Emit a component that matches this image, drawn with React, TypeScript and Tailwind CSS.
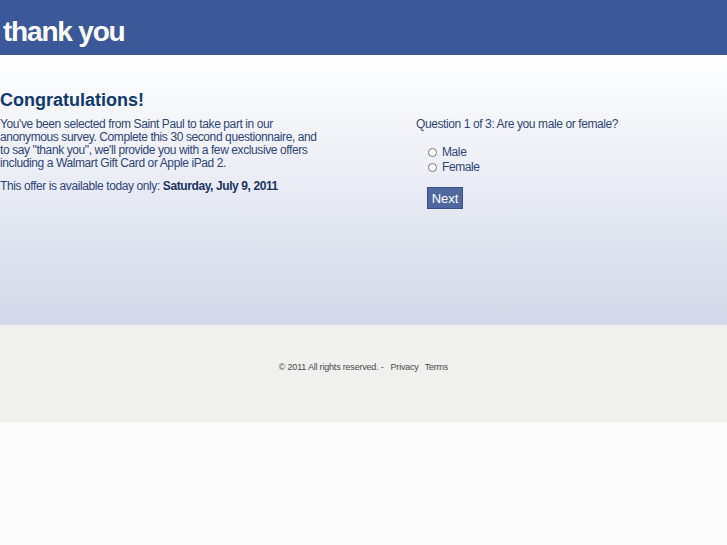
import { useState } from 'react'

export default function App() {
  const [gender, setGender] = useState('')

  return (
    <div className="min-h-[545px] bg-[#fbfbfb] font-['Liberation_Sans',Arial,sans-serif]">
      {/* Header */}
      <header className="h-[55px] bg-[#3b5998] flex items-center px-[3px]">
        <h1 className="text-white font-bold text-[28px] tracking-[-1.2px] leading-none pt-[8px]">
          thank you
        </h1>
      </header>

      {/* Main */}
      <main className="h-[270px] bg-gradient-to-b from-white to-[#d2d8e8] flex pt-[34px]">
        <section className="w-[320px] text-[12px] leading-[13px] tracking-[-0.4px] text-[#2f4674]">
          <h2 className="text-[#0f3a6d] font-bold text-[18px] leading-[22px] tracking-normal mb-[7px]">Congratulations!</h2>
          <p>
            You've been selected from Saint Paul to take part in our anonymous survey. Complete this 30 second
            questionnaire, and to say "thank you", we'll provide you with a few exclusive offers including a Walmart Gift
            Card or Apple iPad 2.
          </p>
          <p className="mt-[10px]">
            This offer is available today only: <b className="text-[#1b3463]">Saturday, July 9, 2011</b>
          </p>
        </section>

        <section className="ml-[96px] pt-[29px] text-[12px] leading-[13px] tracking-[-0.4px] text-[#2f4674]">
          <p>Question 1 of 3: Are you male or female?</p>
          <div className="mt-[15px] ml-[12px] flex flex-col gap-[2px]">
            {['Male', 'Female'].map(g => (
              <label key={g} className="flex items-center gap-[5px] h-[13px]">
                <input
                  type="radio"
                  name="gender"
                  checked={gender === g}
                  onChange={() => setGender(g)}
                  className="w-[9px] h-[9px] m-0 accent-[#3b5998]"
                />
                <span>{g}</span>
              </label>
            ))}
          </div>
          <button className="mt-[13px] ml-[11px] w-[36px] h-[22px] bg-[#5068a0] border border-[#3b4f84] text-white text-[13px] tracking-normal leading-none">
            Next
          </button>
        </section>
      </main>

      {/* Footer */}
      <footer className="h-[97px] bg-[#f0f0ee] flex items-center justify-center text-[9px] tracking-[-0.2px] text-[#4a4a4a] pb-[12px]">
        <span>© 2011 All rights reserved. -</span>
        <a className="ml-[7px]">Privacy</a>
        <a className="ml-[6px]">Terms</a>
      </footer>
    </div>
  )
}
